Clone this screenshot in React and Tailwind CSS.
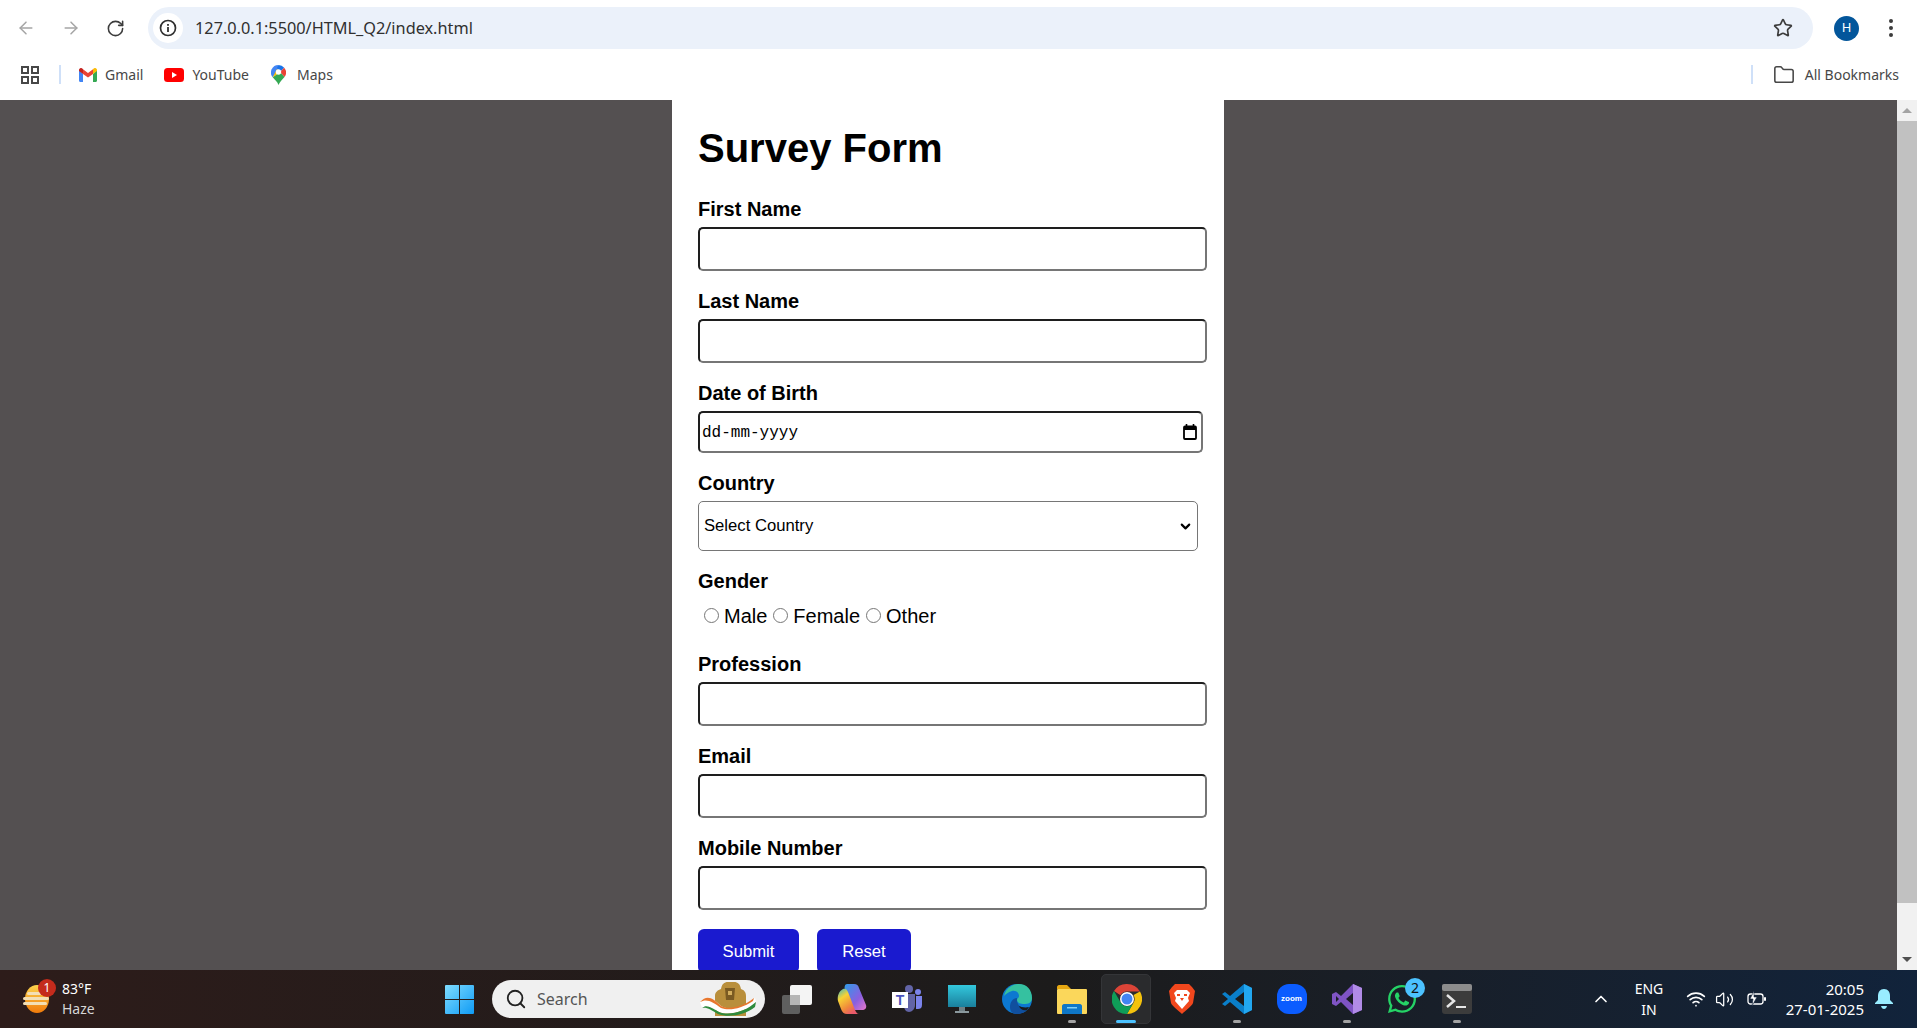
import { ArrowLeft, ArrowRight, RotateCw, Star, Folder, Search, ChevronUp, ChevronDown, Wifi, Volume2 } from 'lucide-react';
import { FaWhatsapp } from 'react-icons/fa';

const inputClass =
  'block w-[509px] h-[44px] mb-[19px] bg-white rounded-[5px] border-2 border-t-[#1e1e1e] border-l-[#1e1e1e] border-r-[#767676] border-b-[#767676]';

function FieldLabel({ children }) {
  return <label className="block h-[23px] mb-[6px] text-[20px] leading-[23px] font-bold text-black">{children}</label>;
}

function TextField({ label }) {
  return (
    <div>
      <FieldLabel>{label}</FieldLabel>
      <input type="text" className={inputClass} />
    </div>
  );
}

function Radio({ label }) {
  return (
    <label className="flex items-center gap-[5px] text-[20px] leading-[23px] text-black">
      <input type="radio" name="gender" className="w-[15px] h-[15px] m-0 mb-[2px]" />
      {label}
    </label>
  );
}

function GmailIcon() {
  return (
    <svg width="18" height="14" viewBox="0 0 18 14">
      <path d="M0 2v10.5c0 .8.6 1.5 1.4 1.5H4V6z" fill="#4285f4" />
      <path d="M18 2v10.5c0 .8-.6 1.5-1.4 1.5H14V6z" fill="#34a853" />
      <path d="M4 6 9 9.6 14 6V1.2L9 5 4 1.2z" fill="#ea4335" />
      <path d="M0 2c0-1.7 2-2.6 3.300-1.600L4 1.200V6L0 3z" fill="#c5221f" />
      <path d="M18 2c0-1.700-2-2.600-3.300-1.600L14 1.200V6l4-3z" fill="#fbbc04" />
    </svg>
  );
}

function YoutubeIcon() {
  return (
    <svg width="20" height="14" viewBox="0 0 20 14">
      <rect width="20" height="14" rx="3.500" fill="#f00" />
      <path d="M8 4v6l5-3z" fill="#fff" />
    </svg>
  );
}

function MapsIcon() {
  return (
    <svg width="15" height="20" viewBox="0 0 15 20">
      <path d="M7.500 0A7.500 7.500 0 0 0 1.700 12.300L7 5z" fill="#4285f4" />
      <path d="M7.500 0a7.500 7.500 0 0 1 5.700 2.700L9 7 6 3z" fill="#1a73e8" />
      <path d="M13.200 2.700A7.500 7.500 0 0 1 13.500 12L9 7z" fill="#ea4335" />
      <path d="M1.700 12.300C4 15 6.500 17 7.500 20c1-3 3.600-5 6-8L9 7z" fill="#34a853" />
      <path d="M1.700 12.300 9 7 6 4z" fill="#fbbc04" />
      <circle cx="7.500" cy="7" r="2.700" fill="#fff" />
    </svg>
  );
}

function AppsIcon() {
  return (
    <svg width="18" height="18" viewBox="0 0 18 18" fill="none" stroke="#474747" strokeWidth="2">
      <rect x="1" y="1" width="6" height="6" />
      <rect x="11" y="1" width="6" height="6" />
      <rect x="1" y="11" width="6" height="6" />
      <rect x="11" y="11" width="6" height="6" />
    </svg>
  );
}

function InfoIcon() {
  return (
    <svg width="18" height="18" viewBox="0 0 18 18">
      <circle cx="9" cy="9" r="7.500" fill="none" stroke="#303030" strokeWidth="1.700" />
      <rect x="8.100" y="8" width="1.800" height="5" fill="#303030" />
      <rect x="8.100" y="5" width="1.800" height="1.800" fill="#303030" />
    </svg>
  );
}

function CalendarIcon() {
  return (
    <svg width="14" height="16" viewBox="0 0 14 16" fill="none">
      <path d="M3.500 0v3M10.500 0v3" stroke="#000" strokeWidth="1.600" />
      <rect x="1" y="2.500" width="12" height="12.500" rx="1" stroke="#000" strokeWidth="1.800" />
      <rect x="1" y="2.500" width="12" height="3.500" fill="#000" />
    </svg>
  );
}

function WeatherIcon() {
  return (
    <svg width="30" height="30" viewBox="0 0 30 30">
      <defs>
        <linearGradient id="sun" x1="0" y1="0" x2="0" y2="1">
          <stop offset="0" stopColor="#fcd34d" />
          <stop offset="1" stopColor="#f07a0a" />
        </linearGradient>
      </defs>
      <ellipse cx="15" cy="15" rx="12" ry="14" fill="url(#sun)" />
      <g fill="#f3dfb4">
        <rect x="5" y="8" width="18" height="3" rx="1.500" />
        <rect x="1" y="13" width="26" height="3" rx="1.500" />
        <rect x="1" y="18" width="24" height="3" rx="1.500" />
      </g>
    </svg>
  );
}

function WindowsIcon() {
  return (
    <svg width="29" height="29" viewBox="0 0 29 29" className="shrink-0">
      <defs>
        <linearGradient id="win" x1="0" y1="0" x2="1" y2="1">
          <stop offset="0" stopColor="#7fdcff" />
          <stop offset="1" stopColor="#0f9bf5" />
        </linearGradient>
      </defs>
      <path d="M1 0h13v14H0V1a1 1 0 0 1 1-1zM15 0h13a1 1 0 0 1 1 1v13H15zM0 15h14v14H1a1 1 0 0 1-1-1zM15 15h14v13a1 1 0 0 1-1 1H15z" fill="url(#win)" />
    </svg>
  );
}

function SearchBadge() {
  return (
    <svg width="58" height="34" viewBox="0 0 58 34" className="shrink-0">
      <path d="M16 34V14c0-4 3-6 6-7 1-5 3-7 7-7h6c4 0 6 2 7 7 3 1 5 3 5 7v20z" fill="#b98f3c" />
      <path d="M26 6h10l-1 12h-8z" fill="#7a5a22" />
      <path d="M29 9h4v4h-4z" fill="#d3ae5e" />
      <path d="M1 20C8 12 14 16 22 24c8 5 22 2 34-8l1 4C46 30 30 34 20 30 12 26 8 22 3 26z" fill="#fff" />
      <path d="M1 20C8 12 14 16 22 24c8 4 22 1 33-8l-1 3C42 27 30 29 22 26 14 20 8 16 1 20z" fill="#e8772e" />
      <path d="M3 26c5-4 9 0 17 4 10 4 26 0 37-10l-1 5C46 33 30 36 19 32 12 28 8 25 3 26z" fill="#2e8b3d" />
    </svg>
  );
}

function TaskViewIcon() {
  return (
    <svg width="30" height="30" viewBox="0 0 30 30">
      <rect x="0" y="11" width="18" height="19" rx="2" fill="#5f5f5f" />
      <rect x="8" y="1" width="22" height="20" rx="2" fill="#f4f4f4" />
      <rect x="8" y="11" width="10" height="10" fill="#b5b5b5" />
    </svg>
  );
}

function CopilotIcon() {
  return (
    <svg width="30" height="30" viewBox="0 0 30 30">
      <defs>
        <linearGradient id="cp1" x1="0" y1="0" x2="1" y2="1">
          <stop offset="0" stopColor="#2f9be8" />
          <stop offset=".6" stopColor="#8a5fe0" />
          <stop offset="1" stopColor="#e878c8" />
        </linearGradient>
        <linearGradient id="cp2" x1="0" y1="0" x2=".6" y2="1">
          <stop offset="0" stopColor="#37b6c8" />
          <stop offset=".35" stopColor="#f7d334" />
          <stop offset=".75" stopColor="#f0883c" />
          <stop offset="1" stopColor="#e85a6a" />
        </linearGradient>
      </defs>
      <path d="M10 0h7c3 0 4 1 5 4l7 17c1 3-1 5-4 5h-7c-2 0-3-1-4-4L8 6c-1-3 0-6 2-6z" fill="url(#cp1)" />
      <path d="M6 5c2-1 4 0 5 3l7 18c1 2 2 4 4 4H10c-3 0-5-2-6-5L1 17C0 12 2 7 6 5z" fill="url(#cp2)" />
    </svg>
  );
}

function TeamsIcon() {
  return (
    <svg width="30" height="30" viewBox="0 0 30 30">
      <circle cx="17" cy="5" r="4" fill="#6264a7" />
      <circle cx="26" cy="8" r="3" fill="#7b83eb" />
      <path d="M12 10h11v11c0 4-3 7-6 7s-5-3-5-6z" fill="#6264a7" />
      <path d="M24 12h6v9c0 3-2 4-4 4h-2z" fill="#7b83eb" />
      <rect x="0" y="8" width="16" height="16" fill="#fff" />
      <text x="8" y="21" textAnchor="middle" fontSize="14" fontWeight="700" fontFamily="Liberation Sans, sans-serif" fill="#4b53bc">T</text>
    </svg>
  );
}

function MonitorIcon() {
  return (
    <svg width="30" height="30" viewBox="0 0 30 30">
      <defs>
        <linearGradient id="mon" x1="0" y1="0" x2="0" y2="1">
          <stop offset="0" stopColor="#33c8dd" />
          <stop offset="1" stopColor="#1a7f9c" />
        </linearGradient>
      </defs>
      <rect x="1" y="1" width="28" height="22" fill="url(#mon)" />
      <rect x="12" y="23" width="6" height="4" fill="#6f7f85" />
      <rect x="8" y="27" width="14" height="2" fill="#8a989d" />
    </svg>
  );
}

function EdgeIcon() {
  return (
    <svg width="30" height="30" viewBox="0 0 30 30">
      <circle cx="15" cy="15" r="15" fill="#0c78d1" />
      <path d="M2 12C4 3 12 0 17 0c8 0 13 6 13 14 0 5-4 6-8 6-3 0-7-1-7-4 0-2 2-2 2-4 0-4-4-6-7-5-4 1-6 3-8 5z" fill="#35c1a0" />
      <path d="M15 16c0 5 4 8 8 8 2 0 3 0 4-1-3 5-7 7-12 7-5 0-7-3-7-7 0-5 3-9 7-9z" fill="#104f9e" />
      <path d="M17 22c2 1 6 2 10 1l-2 3c-4 1-7-1-8-4z" fill="#1b1b1b" />
    </svg>
  );
}

function ExplorerIcon() {
  return (
    <svg width="30" height="30" viewBox="0 0 30 30">
      <path d="M0 3c0-1 1-2 2-2h8l4 4H0z" fill="#e6a711" />
      <rect x="0" y="5" width="30" height="25" rx="1" fill="#fbd75b" />
      <path d="M5 22c0-1 1-2 2-2h16c1 0 2 1 2 2v8H5z" fill="#0f77c7" />
      <rect x="10" y="23" width="10" height="1.500" fill="#7fd0f7" />
    </svg>
  );
}

function ChromeIcon() {
  return (
    <svg width="30" height="30" viewBox="0 0 30 30">
      <path d="M15 0a15 15 0 0 1 13 7.500H15a7.500 7.500 0 0 0-6.500 3.750L2 7a15 15 0 0 1 13-7z" fill="#db4437" />
      <path d="M28 7.500A15 15 0 0 1 15 30l6.500-11.250A7.500 7.500 0 0 0 21.500 11z" fill="#f4c20d" />
      <path d="M15 30A15 15 0 0 1 2 7l6.500 11.250A7.500 7.500 0 0 0 21.500 18.750z" fill="#0f9d58" />
      <circle cx="15" cy="15" r="7" fill="#fff" />
      <circle cx="15" cy="15" r="5.500" fill="#4285f4" />
    </svg>
  );
}

function BraveIcon() {
  return (
    <svg width="26" height="30" viewBox="0 0 26 30">
      <path d="M6 0h14l3 3 3 4-2 12c-1 3-8 8-11 11C10 27 3 22 2 19L0 7l3-4z" fill="#f1471d" />
      <path d="M8 6h10l3 3-2 5 1 3-7 8-7-8 1-3-2-5z" fill="#fff" />
      <path d="M11 14h4l-2 3z" fill="#f1471d" />
      <path d="M8 10h3v2H8zM15 10h3v2h-3z" fill="#f1471d" />
    </svg>
  );
}

function VscodeIcon() {
  return (
    <svg width="30" height="30" viewBox="0 0 30 30">
      <path d="M22 0 30 4v22l-8 4-14-12-5 4-3-2 6-5-6-5 3-2 5 4z" fill="#0a7fca" />
      <path d="M22 0 30 4v22l-8 4z" fill="#22a7f0" />
      <path d="M22 8v14l-9-7z" fill="#1b1b1b" />
    </svg>
  );
}

function ZoomIcon() {
  return (
    <div className="w-[30px] h-[30px] rounded-[12px] bg-[#0b5cff] flex items-center justify-center text-[8px] text-white font-['Liberation_Sans',sans-serif] font-bold">
      zoom
    </div>
  );
}

function VisualStudioIcon() {
  return (
    <svg width="30" height="30" viewBox="0 0 30 30">
      <path d="M21 0l9 4v22l-9 4-12-12-5 4-4-2V10l4-2 5 4z" fill="#7f54c4" />
      <path d="M21 0l9 4v22l-9 4z" fill="#b18be6" />
      <path d="M21 9v12l-7-6z" fill="#1b1d24" />
      <path d="M4 12v6l3-3z" fill="#1b1d24" />
    </svg>
  );
}

function TerminalIcon() {
  return (
    <svg width="30" height="30" viewBox="0 0 30 30">
      <rect x="0" y="0" width="30" height="30" rx="3" fill="#3c3c3c" />
      <rect x="0" y="0" width="30" height="7" rx="2" fill="#8c8c8c" />
      <path d="M5 11l7 6-7 6" fill="none" stroke="#e6e6e6" strokeWidth="2.500" />
      <rect x="14" y="22" width="10" height="2" fill="#e6e6e6" />
    </svg>
  );
}

function BatteryIcon() {
  return (
    <svg width="20" height="16" viewBox="0 0 20 16" fill="none">
      <rect x="1" y="3" width="15" height="10" rx="2.500" stroke="#fff" strokeWidth="1.300" />
      <rect x="17" y="6" width="2" height="4" rx="1" fill="#fff" />
      <path d="M7 0 3 8h3l-1 7 5-9H7z" fill="#fff" stroke="#13233a" strokeWidth=".6" />
    </svg>
  );
}

function TaskbarSlot({ children, running, active, badge }) {
  return (
    <div className="relative w-[55px] h-[58px] flex items-center justify-center shrink-0">
      {active && <div className="absolute left-[2px] top-[4px] w-[50px] h-[50px] rounded-[5px] bg-[#2a2b2d] border border-[#343538]"></div>}
      <div className="relative">{children}</div>
      {running && !active && <div className="absolute bottom-[5px] left-[24px] w-[8px] h-[3px] rounded-full bg-[#a3a3a3]"></div>}
      {active && <div className="absolute bottom-[5px] left-[17px] w-[20px] h-[3px] rounded-full bg-[#4cc2ff]"></div>}
      {badge && (
        <div className="absolute top-[8px] left-[31px] w-[20px] h-[20px] rounded-full bg-[#4cc2ff] text-[#111] text-[14px] leading-[20px] text-center">
          {badge}
        </div>
      )}
    </div>
  );
}

export default function App() {
  return (
    <div className="h-screen w-full flex flex-col overflow-hidden bg-white font-['Liberation_Sans',Arial,sans-serif]">
      {/* Browser toolbar */}
      <div className="h-[56px] flex items-center flex-shrink-0 font-['Noto_Sans',sans-serif]">
        <div className="w-[148px] flex items-center pl-[16px]">
          <ArrowLeft size={20} strokeWidth={1.8} className="text-[#a5a5a5]" />
          <ArrowRight size={20} strokeWidth={1.8} className="text-[#a5a5a5] ml-[25px]" />
          <RotateCw size={19} strokeWidth={2} className="text-[#3c3c3c] ml-[25px]" />
        </div>
        <div className="w-[1665px] h-[42px] rounded-full bg-[#ebf1fa] flex items-center pl-[5px] pr-[20px]">
          <div className="w-[30px] h-[30px] rounded-full bg-white flex items-center justify-center">
            <InfoIcon />
          </div>
          <span className="ml-[12px] text-[16.3px] text-[#303030] flex-1">127.0.0.1:5500/HTML_Q2/index.html</span>
          <Star size={20} strokeWidth={2} className="text-[#3c3c3c]" />
        </div>
        <div className="ml-[21px] w-[25px] h-[25px] rounded-full bg-[#03569b] text-white text-[13px] flex items-center justify-center">H</div>
        <div className="ml-[30px] flex flex-col gap-[3px]">
          <div className="w-[4px] h-[4px] rounded-full bg-[#3c3c3c]"></div>
          <div className="w-[4px] h-[4px] rounded-full bg-[#3c3c3c]"></div>
          <div className="w-[4px] h-[4px] rounded-full bg-[#3c3c3c]"></div>
        </div>
      </div>

      {/* Bookmarks bar */}
      <div className="h-[44px] flex items-center flex-shrink-0 pl-[21px] pr-[18px] pb-[7px] text-[14px] text-[#474747] font-['Noto_Sans',sans-serif]">
        <AppsIcon />
        <div className="ml-[20px] w-[2px] h-[19px] bg-[#cfe0f8]"></div>
        <div className="ml-[18px] flex items-center gap-[8px]"><GmailIcon /><span>Gmail</span></div>
        <div className="ml-[21px] flex items-center gap-[8px]"><YoutubeIcon /><span>YouTube</span></div>
        <div className="ml-[22px] flex items-center gap-[11px]"><MapsIcon /><span>Maps</span></div>
        <div className="ml-auto w-[2px] h-[19px] bg-[#cfe0f8]"></div>
        <Folder size={22} strokeWidth={1.7} className="ml-[20px] text-[#474747]" />
        <span className="ml-[10px]">All Bookmarks</span>
      </div>

      {/* Page */}
      <div className="flex-1 min-h-0 flex">
        <main className="flex-1 min-w-0 bg-[#545051] flex justify-center overflow-hidden pr-[1px]">
          <div className="w-[552px] h-full bg-white pl-[26px] pt-[25px] overflow-hidden flex-shrink-0">
            <h1 className="text-[40px] leading-[46px] font-bold text-black mb-[27px]">Survey Form</h1>
            <TextField label="First Name" />
            <TextField label="Last Name" />
            <div>
              <FieldLabel>Date of Birth</FieldLabel>
              <div className="w-[505px] h-[42px] mb-[19px] bg-white rounded-[5px] border-2 border-t-[#1e1e1e] border-l-[#1e1e1e] border-r-[#767676] border-b-[#767676] flex items-center justify-between pl-[2px] pr-[4px]">
                <span className="font-['Liberation_Mono',monospace] text-[16px] text-black pt-[1px]">dd-mm-yyyy</span>
                <CalendarIcon />
              </div>
            </div>
            <div>
              <FieldLabel>Country</FieldLabel>
              <div className="relative w-[500px] h-[50px] mb-[19px]">
                <select className="block w-full h-full appearance-none bg-white rounded-[5px] border border-[#767676] text-[16.67px] text-black pl-[5px] pb-[2px]">
                  <option>Select Country</option>
                </select>
                <ChevronDown size={15} strokeWidth={3.4} className="absolute right-[5px] top-[18px] text-black pointer-events-none" />
              </div>
            </div>
            <div>
              <FieldLabel>Gender</FieldLabel>
              <div className="flex items-center gap-[6px] pl-[6px] h-[23px] mt-[12px] mb-[25px]">
                <Radio label="Male" />
                <Radio label="Female" />
                <Radio label="Other" />
              </div>
            </div>
            <TextField label="Profession" />
            <TextField label="Email" />
            <TextField label="Mobile Number" />
            <div className="flex gap-[18px]">
              <button className="w-[101px] h-[44px] rounded-[6px] bg-[#1a1acf] text-white text-[16.67px]">Submit</button>
              <button className="w-[94px] h-[44px] rounded-[6px] bg-[#1a1acf] text-white text-[16.67px]">Reset</button>
            </div>
          </div>
        </main>
        {/* Scrollbar */}
        <div className="w-[20px] bg-[#f1f1f1] flex flex-col items-center flex-shrink-0">
          <div className="h-[21px] flex items-center justify-center">
            <div className="w-0 h-0 border-l-[5px] border-r-[5px] border-b-[5px] border-l-transparent border-r-transparent border-b-[#a3a3a3]"></div>
          </div>
          <div className="w-full h-[782px] bg-[#c1c1c1]"></div>
          <div className="flex-1 flex items-end pb-[8px]">
            <div className="w-0 h-0 border-l-[5px] border-r-[5px] border-t-[5px] border-l-transparent border-r-transparent border-t-[#505050]"></div>
          </div>
        </div>
      </div>

      {/* Taskbar */}
      <div className="h-[58px] flex items-center flex-shrink-0 text-white font-['Noto_Sans',sans-serif] bg-linear-to-r from-[#2d1c1a] via-[#1c1b1b] via-55% to-[#11233b] pl-[22px]">
        <div className="relative w-[30px] h-[30px] shrink-0">
          <WeatherIcon />
          <div className="absolute -top-[5px] left-[16px] w-[18px] h-[18px] rounded-full bg-[#c42b1c] text-[12px] leading-[18px] text-center">1</div>
        </div>
        <div className="ml-[10px] w-[383px] shrink-0 text-[14px] leading-[20px]">
          <div>83°F</div>
          <div className="text-[#d6d6d6]">Haze</div>
        </div>
        <WindowsIcon />
        <div className="ml-[18px] w-[273px] h-[38px] shrink-0 rounded-full bg-[#f0f0f0] flex items-center pl-[13px] pr-[8px]">
          <Search size={22} strokeWidth={2} className="text-[#222]" />
          <span className="ml-[10px] text-[16px] text-[#555] flex-1">Search</span>
          <SearchBadge />
        </div>
        <div className="ml-[4px] flex items-center shrink-0">
          <TaskbarSlot><TaskViewIcon /></TaskbarSlot>
          <TaskbarSlot><CopilotIcon /></TaskbarSlot>
          <TaskbarSlot><TeamsIcon /></TaskbarSlot>
          <TaskbarSlot><MonitorIcon /></TaskbarSlot>
          <TaskbarSlot><EdgeIcon /></TaskbarSlot>
          <TaskbarSlot running><ExplorerIcon /></TaskbarSlot>
          <TaskbarSlot active><ChromeIcon /></TaskbarSlot>
          <TaskbarSlot><BraveIcon /></TaskbarSlot>
          <TaskbarSlot running><VscodeIcon /></TaskbarSlot>
          <TaskbarSlot><ZoomIcon /></TaskbarSlot>
          <TaskbarSlot running><VisualStudioIcon /></TaskbarSlot>
          <TaskbarSlot badge="2"><FaWhatsapp size={32} className="text-[#25d366]" /></TaskbarSlot>
          <TaskbarSlot running><TerminalIcon /></TaskbarSlot>
        </div>
        <ChevronUp size={20} strokeWidth={2} className="ml-[107px] shrink-0" />
        <div className="ml-[16px] w-[44px] shrink-0 text-[14px] leading-[21px] text-center">
          <div>ENG</div>
          <div>IN</div>
        </div>
        <Wifi size={20} strokeWidth={2} className="ml-[15px] shrink-0" />
        <Volume2 size={19} strokeWidth={1.6} className="ml-[9px] shrink-0" />
        <div className="ml-[13px] shrink-0"><BatteryIcon /></div>
        <div className="ml-[10px] w-[87px] shrink-0 text-[15px] leading-[20px] text-right">
          <div>20:05</div>
          <div>27-01-2025</div>
        </div>
        <svg width="18" height="20" viewBox="0 0 18 20" className="ml-[11px] shrink-0">
          <path d="M9 0c4 0 6 3 6 7v4l3 3v1H0v-1l3-3V7c0-4 2-7 6-7z" fill="#99ecff" />
          <path d="M6 17h6c-.5 2-1.500 3-3 3s-2.500-1-3-3z" fill="#99ecff" />
        </svg>
      </div>
    </div>
  );
}
